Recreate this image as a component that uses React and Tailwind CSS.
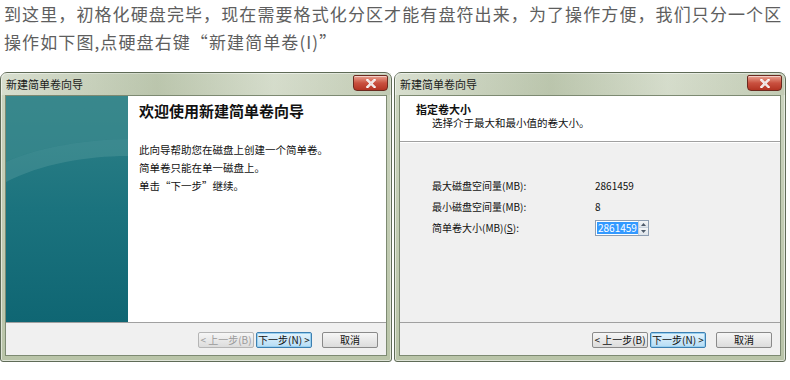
import React from "react";

const cjk = { fontFamily: '"Noto Sans CJK SC", "Noto Sans", sans-serif' };

function CloseButton() {
  return (
    <div className="w-[35px] h-[16px] rounded-b-[4px] rounded-t-[2px] border border-[#6b2a20] bg-gradient-to-b from-[#e8a190] via-[#c9503f] to-[#b33322] flex items-center justify-center shadow-[inset_0_1px_0_rgba(255,255,255,0.5)]">
      <svg width="10" height="9" viewBox="0 0 10 9">
        <path d="M1.5 1 L8.5 8 M8.5 1 L1.5 8" stroke="#fff" strokeWidth="2.4" strokeLinecap="square" />
        <path d="M1.5 1 L8.5 8 M8.5 1 L1.5 8" stroke="#5a1c14" strokeWidth="0.5" opacity="0.4" />
      </svg>
    </div>
  );
}

function WinButton({ children, primary, disabled }) {
  return (
    <div
      className={`w-[56px] h-[16px] rounded-[2px] border flex items-center justify-center text-[10px] leading-none whitespace-nowrap ${
        primary
          ? "border-[#3c7fb1] bg-gradient-to-b from-[#e5f4fc] to-[#b5dcf5] shadow-[inset_0_0_0_1px_#9ad0f0]"
          : "border-[#8a8a8a] bg-gradient-to-b from-[#f6f6f6] to-[#dcdcdc]"
      } ${disabled ? "text-[#9a9a9a] border-[#b5b5b5]" : "text-[#111]"}`}
      style={cjk}
    >
      {children}
    </div>
  );
}

function Frame({ children }) {
  return (
    <div className="w-[392px] h-[290px] rounded-t-[7px] rounded-b-[3px] border border-[#5f6b57] bg-gradient-to-b from-[#cbd4bf] via-[#c2ccb3] to-[#b9c4a8] flex flex-col shadow-[inset_0_0_0_1px_rgba(255,255,255,0.55)]">
      <div className="h-[22px] flex items-start justify-between pl-[5px] pr-[3px] pt-[2px] bg-[linear-gradient(90deg,rgba(255,255,255,0.25),rgba(140,155,120,0.25)_40%,rgba(255,255,255,0.2)_70%,rgba(160,170,140,0.2))]">
        <span className="text-[11px] text-[#1a1a1a] mt-[4px] leading-none" style={cjk}>
          新建简单卷向导
        </span>
        <CloseButton />
      </div>
      <div className="mx-[4px] h-[261px] border border-[#7d8a72] flex flex-col overflow-hidden">
        {children}
      </div>
    </div>
  );
}

function Footer({ backEnabled }) {
  return (
    <div className="h-[33px] bg-[#f0f0f0] border-t border-[#a0a0a0] flex items-center justify-end pr-[8px] pt-[1px]">
      <div className="flex gap-[2px]">
        <WinButton disabled={!backEnabled}>&lt; 上一步(B)</WinButton>
        <WinButton primary>下一步(N) &gt;</WinButton>
      </div>
      <div className="ml-[10px]">
        <WinButton>取消</WinButton>
      </div>
    </div>
  );
}

function TealPanel() {
  return (
    <div className="w-[122px] h-full relative bg-gradient-to-b from-[#2f8288] via-[#1b737e] to-[#0f6673]">
      <svg className="absolute inset-0" width="122" height="228" viewBox="0 0 122 228">
        <path d="M0 66 C35 50 80 44 122 43 L122 0 L0 0 Z" fill="#3f8c90" opacity="0.6" />
        <path d="M0 66 C35 50 80 44 122 43 L122 60 C80 60 35 68 0 86 Z" fill="#6aa8a8" opacity="0.3" />
      </svg>
    </div>
  );
}

function WelcomeDialog() {
  return (
    <Frame>
      <div className="flex h-[227px]">
        <TealPanel />
        <div className="flex-1 bg-white pl-[11px] pt-[5px]" style={cjk}>
          <div className="text-[15px] font-bold text-[#111] leading-[20px]">欢迎使用新建简单卷向导</div>
          <div className="mt-[20px] text-[10.5px] text-[#111] leading-[18px]">
            <div>此向导帮助您在磁盘上创建一个简单卷。</div>
            <div>简单卷只能在单一磁盘上。</div>
            <div>单击“下一步”继续。</div>
          </div>
        </div>
      </div>
      <Footer backEnabled={false} />
    </Frame>
  );
}

function SizeDialog() {
  const rows = [
    ["最大磁盘空间量(MB):", "2861459"],
    ["最小磁盘空间量(MB):", "8"],
  ];
  return (
    <Frame>
      <div className="h-[46px] bg-white border-b border-[#a0a0a0] pl-[16px] pt-[7px]" style={cjk}>
        <div className="text-[11px] font-bold text-[#111] leading-[13px]">指定卷大小</div>
        <div className="text-[10.5px] text-[#111] leading-[13px] pl-[16px]">选择介于最大和最小值的卷大小。</div>
      </div>
      <div className="h-[181px] bg-[#f0f0f0] border-t border-white pl-[32px] pt-[32px] text-[10px] text-[#111]" style={cjk}>
        {rows.map(([label, value]) => (
          <div key={label} className="flex items-center h-[21px]">
            <span className="w-[163px]">{label}</span>
            <span>{value}</span>
          </div>
        ))}
        <div className="flex items-center h-[22px]">
          <span className="w-[163px]">
            简单卷大小(MB)(<span className="underline">S</span>):
          </span>
          <div className="w-[54px] h-[16px] border border-[#8d9eb3] bg-white flex items-center">
            <span className="ml-[1px] bg-[#3399ff] text-white px-[1px] leading-[12px]">2861459</span>
            <div className="ml-auto w-[12px] h-full border-l border-[#c9d3de] flex flex-col">
              <div className="flex-1 flex items-center justify-center bg-gradient-to-b from-[#f4f6f8] to-[#dde3ea] border-b border-[#c9d3de]">
                <svg width="5" height="3" viewBox="0 0 5 3"><path d="M0 3 L2.5 0 L5 3 Z" fill="#4d5a6a" /></svg>
              </div>
              <div className="flex-1 flex items-center justify-center bg-gradient-to-b from-[#f4f6f8] to-[#dde3ea]">
                <svg width="5" height="3" viewBox="0 0 5 3"><path d="M0 0 L2.5 3 L5 0 Z" fill="#4d5a6a" /></svg>
              </div>
            </div>
          </div>
        </div>
      </div>
      <Footer backEnabled />
    </Frame>
  );
}

export default function App() {
  return (
    <div className="w-[790px] h-[380px] bg-white overflow-hidden">
      <div
        className="pl-[4px] pt-0 text-[17px] leading-[28px] tracking-[1.1px] text-[#5e5e5e] whitespace-nowrap"
        style={cjk}
      >
        <div>到这里，初格化硬盘完毕，现在需要格式化分区才能有盘符出来，为了操作方便，我们只分一个区</div>
        <div>操作如下图,点硬盘右键“新建简单卷(I)”</div>
      </div>
      <div className="mt-[16px] flex gap-[2px]">
        <WelcomeDialog />
        <SizeDialog />
      </div>
    </div>
  );
}
